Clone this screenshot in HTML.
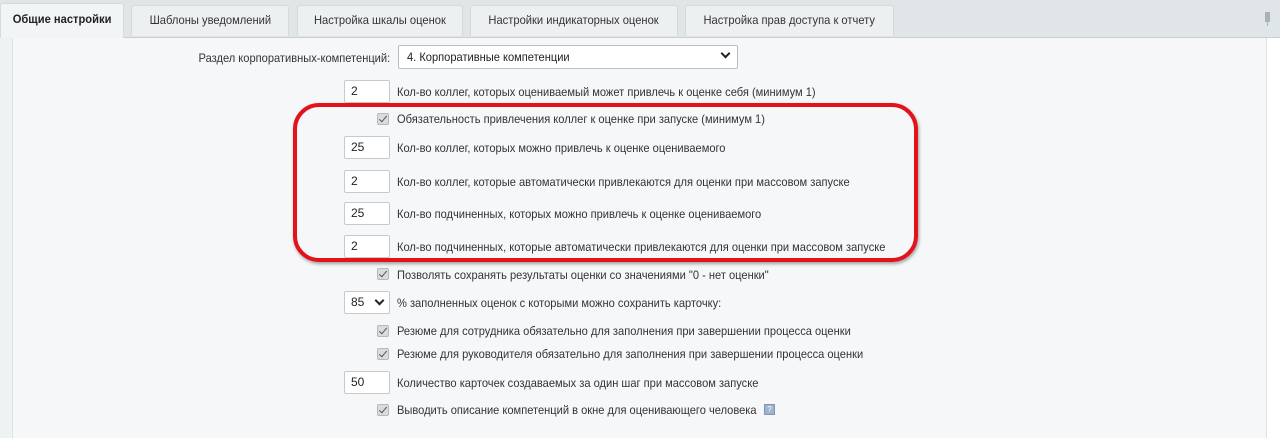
<!DOCTYPE html>
<html><head><meta charset="utf-8"><style>
body{margin:0;width:1280px;height:425px;overflow:hidden;background:#fff;font-family:"Liberation Sans",Arial,sans-serif;font-size:12px;color:#333;position:relative}
.tabbar{position:absolute;left:0;top:0;width:1280px;height:37px;background:#e0e6e8;border-bottom:1px solid #c9d0d3}
.tab{position:absolute;top:5px;height:31px;line-height:28px;background:#edf0f1;border:1px solid #d3d9dc;border-bottom:none;border-radius:3px 3px 0 0;text-align:center;color:#333;box-sizing:border-box}
.tab span{display:inline-block;transform:scaleX(.93)}
.tab.act{background:#f2f5f5;font-weight:bold;color:#222;top:3px;height:35px;line-height:30px;border-color:#d6dbdd}
.content{position:absolute;left:12px;top:38px;width:1253px;height:400px;background:#f5f7f8;border-left:1px solid #dfe3e5;border-right:1px solid #dfe3e5}
.leftstrip{position:absolute;left:0;top:38px;width:12px;height:400px;background:#eef2f3}
.inp{position:absolute;left:344px;width:46px;height:23px;background:#fff;border:1px solid #c5cbcd;border-radius:2px;box-sizing:border-box;padding-left:6px;line-height:21px;color:#222}
.lbl{position:absolute;left:397px;white-space:nowrap;line-height:14px;transform:scaleX(.925);transform-origin:0 0}
.cb{position:absolute;left:377px;width:12px;height:12px;background:#d9dcdd;border:1px solid #b5b9bb;border-radius:2px;box-sizing:border-box}
.cb:after{content:"";position:absolute;left:3px;top:0px;width:3px;height:7px;border:solid #555;border-width:0 1.5px 1.5px 0;transform:rotate(40deg)}
.sel{position:absolute;left:398px;top:45px;width:340px;height:24px;background:#fff;border:1px solid #b9c0c3;border-radius:2px;box-sizing:border-box;padding-left:8px;line-height:22px;color:#222}
.sel span{display:inline-block;transform:scaleX(.925);transform-origin:0 0}
.chev{position:absolute;width:5px;height:5px;border:solid #222;border-width:0 2px 2px 0;transform:rotate(45deg)}
.red{position:absolute;left:293px;top:103px;width:625px;height:159px;border:4px solid #e3131b;border-radius:26px;box-sizing:border-box;box-shadow:1px 2px 3px rgba(0,0,0,.35)}
</style></head><body>
<div class="tabbar"></div>
<div class="tab act" style="left:0;width:124px"><span>Общие настройки</span></div>
<div class="tab" style="left:131px;width:158px"><span>Шаблоны уведомлений</span></div>
<div class="tab" style="left:297px;width:166px"><span>Настройка шкалы оценок</span></div>
<div class="tab" style="left:470px;width:208px"><span>Настройки индикаторных оценок</span></div>
<div class="tab" style="left:685px;width:209px"><span>Настройка прав доступа к отчету</span></div>
<div style="position:absolute;left:1265px;top:12px;width:5px;height:10px;background:#aab2b6"></div>
<div style="position:absolute;left:1267px;top:21px;width:1px;height:5px;background:#aab2b6"></div>
<div class="leftstrip"></div>
<div class="content"></div>

<div style="position:absolute;left:0;width:390px;top:51px;text-align:right;white-space:nowrap;line-height:14px"><span style="display:inline-block;transform:scaleX(.925);transform-origin:100% 0">Раздел корпоративных-компетенций:</span></div>
<div class="sel"><span>4. Корпоративные компетенции</span></div>
<div class="chev" style="left:722px;top:50px"></div>

<div class="inp" style="top:80px">2</div><div class="lbl" style="top:85px">Кол-во коллег, которых оцениваемый может привлечь к оценке себя (минимум 1)</div>
<div class="cb" style="top:113px"></div><div class="lbl" style="top:112px">Обязательность привлечения коллег к оценке при запуске (минимум 1)</div>
<div class="inp" style="top:136px">25</div><div class="lbl" style="top:141px">Кол-во коллег, которых можно привлечь к оценке оцениваемого</div>
<div class="inp" style="top:170px">2</div><div class="lbl" style="top:175px">Кол-во коллег, которые автоматически привлекаются для оценки при массовом запуске</div>
<div class="inp" style="top:202px">25</div><div class="lbl" style="top:207px">Кол-во подчиненных, которых можно привлечь к оценке оцениваемого</div>
<div class="inp" style="top:235px">2</div><div class="lbl" style="top:240px">Кол-во подчиненных, которые автоматически привлекаются для оценки при массовом запуске</div>
<div class="cb" style="top:268px"></div><div class="lbl" style="top:268px">Позволять сохранять результаты оценки со значениями "0 - нет оценки"</div>
<div class="inp" style="top:291px;width:46px">85</div><div class="chev" style="left:376px;top:297px"></div><div class="lbl" style="top:296px">% заполненных оценок с которыми можно сохранить карточку:</div>
<div class="cb" style="top:325px"></div><div class="lbl" style="top:324px">Резюме для сотрудника обязательно для заполнения при завершении процесса оценки</div>
<div class="cb" style="top:348px"></div><div class="lbl" style="top:347px">Резюме для руководителя обязательно для заполнения при завершении процесса оценки</div>
<div class="inp" style="top:371px">50</div><div class="lbl" style="top:376px">Количество карточек создаваемых за один шаг при массовом запуске</div>
<div class="cb" style="top:404px"></div><div class="lbl" style="top:403px">Выводить описание компетенций в окне для оценивающего человека</div>
<div style="position:absolute;left:764px;top:404px;width:11px;height:11px;background:#9fb4cc;border:1px solid #7f97b3;box-sizing:border-box;color:#fff;font-size:8px;line-height:9px;text-align:center">?</div>

<div class="red"></div>
</body></html>
